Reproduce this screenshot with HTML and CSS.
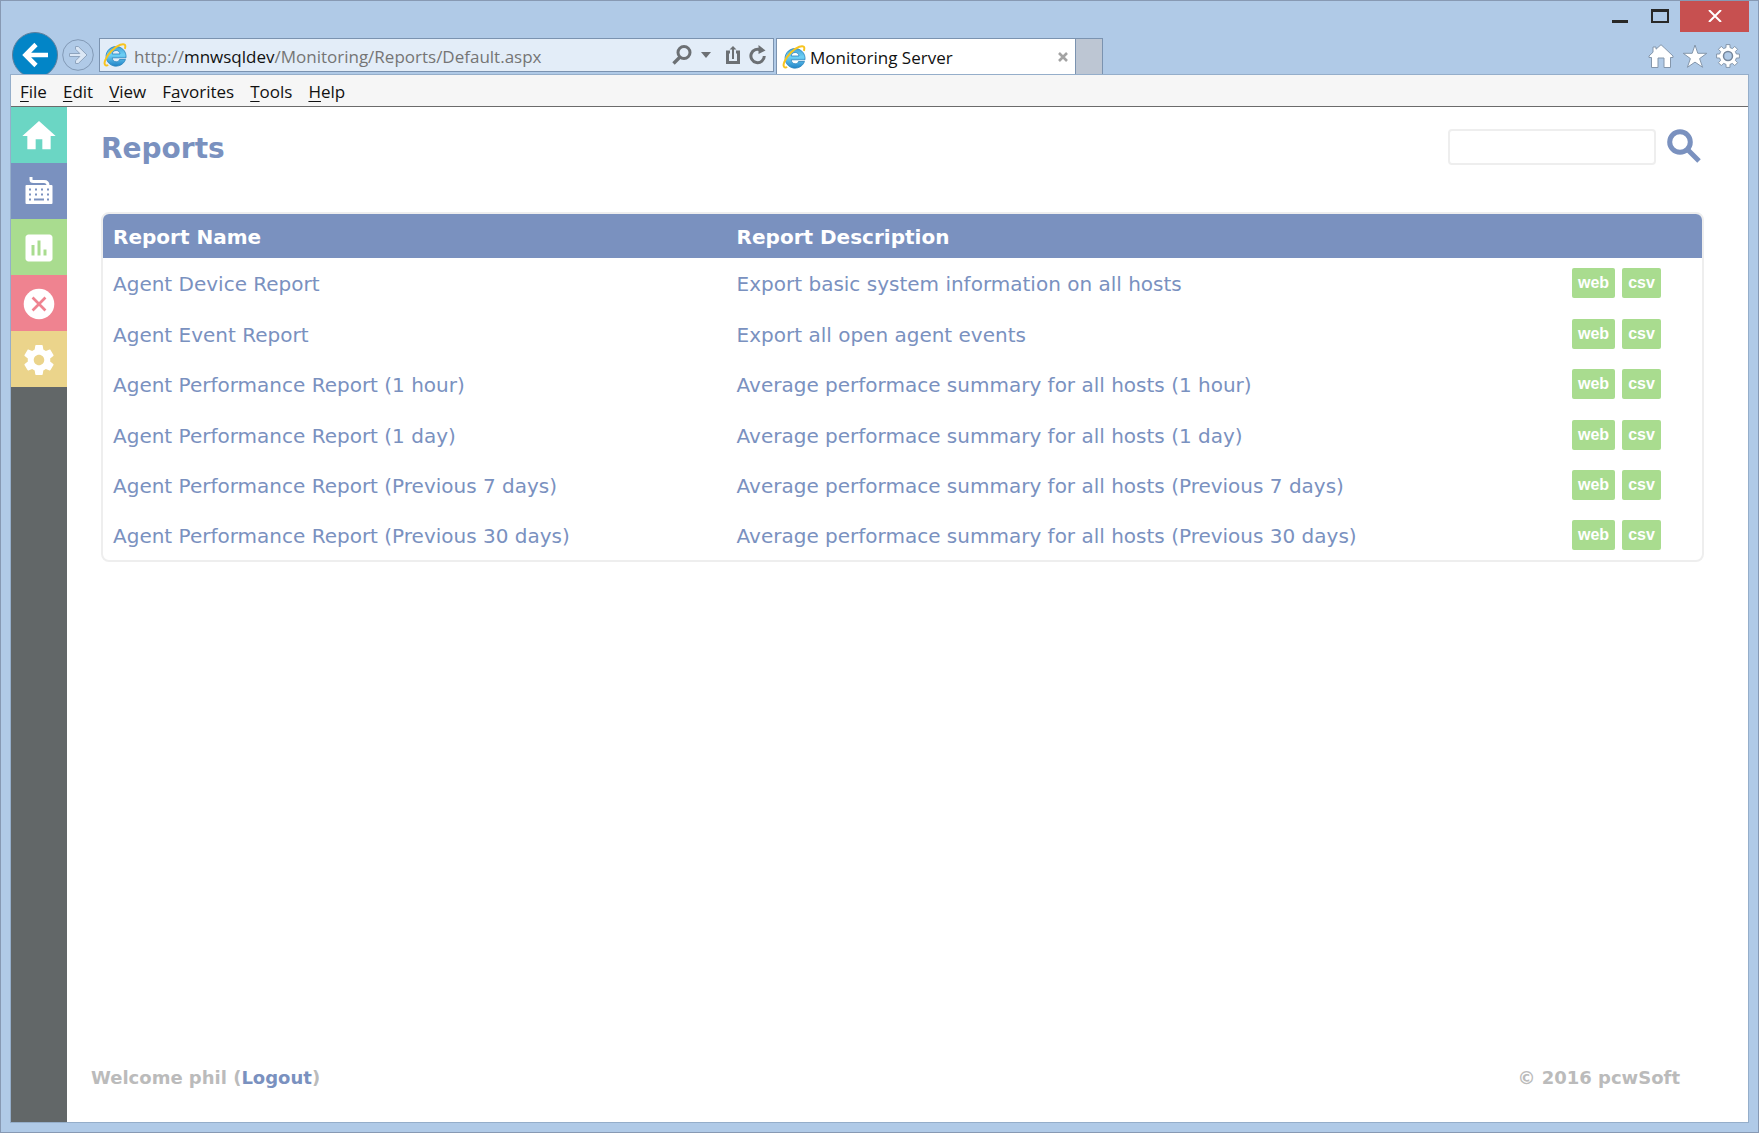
FILE: index.html
```html
<!DOCTYPE html>
<html lang="en">
<head>
<meta charset="utf-8">
<meta name="viewport" content="width=device-width, initial-scale=1">
<title>Monitoring Server</title>
<link rel="stylesheet" href="styles.css">
</head>
<body>
<svg class="defs" aria-hidden="true">
  <defs>
    <linearGradient id="ie-blue" gradientUnits="userSpaceOnUse" x1="0" y1="3" x2="0" y2="23">
      <stop offset="0" stop-color="#3f9fd6"/>
      <stop offset=".45" stop-color="#6fd0f5"/>
      <stop offset="1" stop-color="#2285c8"/>
    </linearGradient>
    <symbol id="ie-logo" viewBox="0 0 24 24">
      <path d="M22.500 16.500A10 9.800 0 1 1 23 12.500V14.800H9.200C9.500 17.300 11 18.800 13.200 18.800 14.900 18.800 15.900 18 16.500 16.500zM9.200 11H17C16.700 8.700 15.300 7.500 13.200 7.500 11 7.500 9.600 8.700 9.200 11z" fill="url(#ie-blue)" fill-rule="evenodd" stroke="#2a84bd" stroke-width=".8"/>
      <path d="M5.200 22C2 23.800.6 21 2.400 16.800 5 10.700 11.500 3.800 17.300 1.700 21.800.2 23.200 2 21.800 5.800" fill="none" stroke="#f7c41f" stroke-width="2"/>
    </symbol>
  </defs>
</svg>
<div class="window">
  <header class="chrome">
    <div class="caption">
      <button class="caption-btn minimize" aria-label="Minimize"><svg width="16" height="14"><path d="M0 11h16v3H0z" fill="#282828"/></svg></button>
      <button class="caption-btn maximize" aria-label="Maximize"><svg width="18" height="14"><path d="M0 0h18v14H0zM2 3v9h14V3z" fill="#282828" fill-rule="evenodd"/></svg></button>
      <button class="caption-btn close" aria-label="Close"><svg width="14" height="12"><path d="M1 0l12 12M13 0L1 12" stroke="#fff" stroke-width="2"/></svg></button>
    </div>
    <div class="toolbar">
      <button class="back" aria-label="Back"><svg width="46" height="46" viewBox="0 0 46 46"><circle cx="23" cy="23" r="22.500" fill="#0285c7" stroke="#5f7f9c"/><path d="M36 23H14M24 12.500L13.500 23 24 33.500" fill="none" stroke="#fff" stroke-width="4.600"/></svg></button>
      <button class="forward" aria-label="Forward"><svg width="32" height="32" viewBox="0 0 32 32"><circle cx="16" cy="16" r="15.300" fill="none" stroke="#8299b5"/><path d="M7.500 14.500h10.300l-4.300-4.300V7.500h2.800l8.700 8.500-8.700 8.500h-2.800v-2.700l4.300-4.300H7.500z" fill="#dbe7f5" stroke="#8ea4be"/></svg></button>
      <div class="address">
        <svg class="logo" width="24" height="24"><use href="#ie-logo"/></svg>
        <div class="url" role="textbox" aria-label="Address" contenteditable="true" spellcheck="false">http://<span class="host">mnwsqldev</span>/Monitoring/Reports/Default.aspx</div>
        <button class="addr-btn search-btn" aria-label="Search"><svg width="20" height="20"><circle cx="12" cy="7.500" r="6" fill="none" stroke="#6c7074" stroke-width="3"/><path d="M8 12l-6.500 6.500" stroke="#6c7074" stroke-width="3.400"/></svg></button>
        <button class="addr-btn menu-btn" aria-label="Show address list"><svg width="10" height="6"><path d="M0 0h10L5 6z" fill="#6c7074"/></svg></button>
        <button class="addr-btn share-btn" aria-label="Share"><svg width="14" height="18"><path d="M4 6H1.500v10.500h11V6H10" fill="none" stroke="#6c7074" stroke-width="3"/><path d="M7 0l3.500 3.500H8V13H6V3.500H3.500z" fill="#6c7074"/></svg></button>
        <button class="addr-btn" aria-label="Refresh"><svg width="18" height="20"><path d="M12 5.200A6.700 6.700 0 1 0 15.300 11" fill="none" stroke="#6c7074" stroke-width="3"/><path d="M9.500 0l7 5.500-7 3.500z" fill="#6c7074"/></svg></button>
      </div>
      <div class="tab">
        <svg class="logo" width="24" height="24"><use href="#ie-logo"/></svg>
        <span class="tab-title">Monitoring Server</span>
        <button class="tab-close" aria-label="Close tab"><svg width="10" height="10"><path d="M1 1l8 8M9 1L1 9" stroke="#a3a3a3" stroke-width="2.600"/></svg></button>
      </div>
      <button class="new-tab" aria-label="New tab"></button>
      <div class="tools">
        <button aria-label="Home"><svg width="26" height="24"><path d="M13 .7l3.800 3.500L25 12v1.500h-2.500v10H16V14h-6v9.500H3.500v-10H1V12l4-3.800V3h3v2.200z" fill="#fff" stroke="#8496ab"/></svg></button>
        <button aria-label="Favorites"><svg width="26" height="24"><path d="M13 1l2.800 8.300h9l-7.200 5.300 3 8.700-7.600-5.200-7.600 5.200 3-8.700-7.200-5.300h9z" fill="#fff" stroke="#8496ab"/></svg></button>
        <button aria-label="Tools"><svg width="24" height="24" viewBox="0 0 24 24"><path d="M10 .6h4v3l2.500 1 2.200-2.200 2.900 2.900-2.200 2.200 1 2.500h3v4h-3l-1 2.500 2.200 2.200-2.900 2.900-2.200-2.200-2.500 1v3h-4v-3l-2.500-1-2.200 2.200-2.900-2.900 2.200-2.200-1-2.500h-3v-4h3l1-2.500-2.200-2.200 2.900-2.900 2.200 2.200 2.500-1z" fill="#fff" stroke="#8496ab"/><circle cx="12" cy="12" r="4.500" fill="#b0cae7" stroke="#75869b" stroke-width="1.500"/></svg></button>
      </div>
    </div>
  </header>
  <div class="client">
    <nav class="menubar" aria-label="Menu bar">
      <button><u>F</u>ile</button>
      <button><u>E</u>dit</button>
      <button><u>V</u>iew</button>
      <button>F<u>a</u>vorites</button>
      <button><u>T</u>ools</button>
      <button><u>H</u>elp</button>
    </nav>
    <div class="page">
      <nav class="sidebar" aria-label="Sections">
        <a href="#home" class="teal" aria-label="Home"><svg width="40" height="40" viewBox="0 0 24 24"><path d="M10 20v-6h4v6h5v-8h3L12 3 2 12h3v8z" fill="#fff"/></svg></a>
        <a href="#agents" class="blue" aria-label="Agents"><svg width="28" height="30" viewBox="0 0 28 30"><path d="M6 0v2.500C6 4 7 4.500 8.500 4.500H19c2.500 0 4 1 4 4" fill="none" stroke="#fff" stroke-width="3"/><rect x=".5" y="8" width="27" height="19" rx="1" fill="#fff"/><path d="M4 12.500h2M10 12.500h2M16 12.500h2M22 12.500h2M4 17.500h2M10 17.500h2M16 17.500h2M22 17.500h2M4 22.500h2M9 22.500h10M22 22.500h2" stroke="#7a91bf" stroke-width="2"/></svg></a>
        <a href="#reports" class="green" aria-label="Reports"><svg width="36" height="36" viewBox="0 0 24 24"><path d="M19 3H5c-1.100 0-2 .9-2 2v14c0 1.100.9 2 2 2h14c1.100 0 2-.9 2-2V5c0-1.100-.9-2-2-2zM9 17H7v-7h2zm4 0h-2V7h2zm4 0h-2v-4h2z" fill="#fff"/></svg></a>
        <a href="#errors" class="red" aria-label="Errors"><svg width="36" height="36" viewBox="0 0 24 24"><circle cx="12" cy="12" r="10.200" fill="#fff"/><path d="M7.700 7.700l8.600 8.600M16.300 7.700l-8.600 8.600" stroke="#ef8390" stroke-width="1.800"/></svg></a>
        <a href="#settings" class="yellow" aria-label="Settings"><svg width="36" height="36" viewBox="0 0 24 24"><path d="M19.430 12.980c.04-.32.07-.64.07-.98s-.03-.66-.07-.98l2.110-1.650c.19-.15.24-.42.12-.64l-2-3.460c-.12-.22-.39-.3-.61-.22l-2.490 1c-.52-.4-1.080-.73-1.690-.98l-.38-2.650C14.460 2.180 14.250 2 14 2h-4c-.25 0-.46.18-.49.42l-.38 2.650c-.61.25-1.170.59-1.690.98l-2.490-1c-.23-.09-.49 0-.61.22l-2 3.460c-.13.22-.07.49.12.64l2.110 1.650c-.04.32-.07.65-.07.98s.03.66.07.98l-2.110 1.650c-.19.15-.24.42-.12.64l2 3.460c.12.22.39.3.61.22l2.490-1c.52.4 1.080.73 1.690.98l.38 2.650c.03.24.24.42.49.42h4c.25 0 .46-.18.49-.42l.38-2.650c.61-.25 1.170-.59 1.690-.98l2.490 1c.23.09.49 0 .61-.22l2-3.460c.12-.22.07-.49-.12-.64zM12 15.500c-1.930 0-3.500-1.570-3.500-3.500s1.570-3.500 3.500-3.500 3.500 1.570 3.500 3.500-1.570 3.500-3.500 3.500z" fill="#fff"/></svg></a>
      </nav>
      <div class="body">
        <main>
          <div class="heading">
            <h1>Reports</h1>
            <form class="search" role="search">
              <input type="search" aria-label="Search reports">
              <button type="button" aria-label="Search"><svg width="34" height="34" viewBox="0 0 34 34"><circle cx="13" cy="13" r="10.300" fill="none" stroke="#7a91bf" stroke-width="5"/><path d="M20.500 20.500L32 32" stroke="#7a91bf" stroke-width="5"/></svg></button>
            </form>
          </div>
          <div class="panel">
            <table>
              <thead>
                <tr><th class="col-name">Report Name</th><th>Report Description</th><th class="col-actions"></th></tr>
              </thead>
              <tbody>
                <tr><td>Agent Device Report</td><td>Export basic system information on all hosts</td><td class="cell-actions"><div class="actions"><button>web</button><button>csv</button></div></td></tr>
                <tr><td>Agent Event Report</td><td>Export all open agent events</td><td class="cell-actions"><div class="actions"><button>web</button><button>csv</button></div></td></tr>
                <tr><td>Agent Performance Report (1 hour)</td><td>Average performace summary for all hosts (1 hour)</td><td class="cell-actions"><div class="actions"><button>web</button><button>csv</button></div></td></tr>
                <tr><td>Agent Performance Report (1 day)</td><td>Average performace summary for all hosts (1 day)</td><td class="cell-actions"><div class="actions"><button>web</button><button>csv</button></div></td></tr>
                <tr><td>Agent Performance Report (Previous 7 days)</td><td>Average performace summary for all hosts (Previous 7 days)</td><td class="cell-actions"><div class="actions"><button>web</button><button>csv</button></div></td></tr>
                <tr><td>Agent Performance Report (Previous 30 days)</td><td>Average performace summary for all hosts (Previous 30 days)</td><td class="cell-actions"><div class="actions"><button>web</button><button>csv</button></div></td></tr>
              </tbody>
            </table>
          </div>
        </main>
        <footer>
          <span>Welcome phil (<a href="#logout">Logout</a>)</span>
          <span>© 2016 pcwSoft</span>
        </footer>
      </div>
    </div>
  </div>
</div>
</body>
</html>
```
FILE: styles.css
```css
* { box-sizing: border-box; }

body {
  margin: 0;
  font-family: "DejaVu Sans", Verdana, sans-serif;
  font-size: 20px;
  color: #7a91bf;
}

button {
  margin: 0;
  padding: 0;
  border: 0;
  background: none;
  font: inherit;
  color: inherit;
}

svg { display: block; flex: none; }

.defs { position: absolute; width: 0; height: 0; }

/* Browser window */
.window {
  display: flex;
  flex-direction: column;
  min-height: 100vh;
  padding: 0 9px 9px;
  border: 1px solid #8799b3;
  background: #b0cae7;
}

.chrome, .menubar {
  font-family: "Open Sans", "Segoe UI", sans-serif;
  font-size: 17px;
  color: #111;
}

.caption {
  display: flex;
  justify-content: flex-end;
  height: 31px;
}

.caption-btn {
  display: flex;
  justify-content: center;
  padding-top: 8px;
  width: 40px;
}

.close {
  width: 69px;
  padding-top: 9px;
  background: #c75050;
}

.toolbar {
  display: flex;
  align-items: flex-end;
  height: 42px;
  padding-left: 2px;
  overflow: hidden;
}

.back { align-self: flex-start; }

.forward { margin: 0 5px 3px 4px; }

.address {
  display: flex;
  align-items: center;
  flex: 0 1 675px;
  min-width: 0;
  height: 34px;
  margin: 0 2px 2px 0;
  padding: 0 6px 0 3px;
  border: 1px solid #7b93b0;
  background: #e3edf8;
}

.url {
  flex: 1;
  min-width: 0;
  margin: 2px 0 0 7px;
  overflow: hidden;
  white-space: nowrap;
  outline: 0;
  color: #757575;
}

.host { color: #111; }

.search-btn { margin-right: 9px; }
.menu-btn { margin-right: 15px; }
.share-btn { margin-right: 9px; }

.tab {
  display: flex;
  align-items: center;
  flex: 0 1 300px;
  min-width: 0;
  height: 36px;
  padding: 0 7px 0 5px;
  border: 1px solid #7b93b0;
  border-bottom: 0;
  background: #fff;
}

.tab-title {
  flex: 1;
  min-width: 0;
  margin: 2px 0 0 4px;
  overflow: hidden;
  white-space: nowrap;
}

.new-tab {
  width: 27px;
  height: 36px;
  border: 1px solid #7b93b0;
  border-width: 1px 1px 0 0;
  background: #bdc6d3;
}

.tools {
  display: flex;
  gap: 8px;
  margin-left: auto;
  padding: 0 9px 6px 0;
}

.client {
  display: flex;
  flex-direction: column;
  flex: 1;
  border: 1px solid #95aeca;
  background: #fff;
}

.menubar {
  display: flex;
  gap: 16px;
  height: 32px;
  padding: 2px 9px 0;
  border-bottom: 1px solid #6b6b6b;
  background: #f6f6f6;
}

.menubar u { text-underline-offset: 3px; text-decoration-thickness: 1px; }

/* Monitoring page */
.page { display: flex; flex: 1; }

.sidebar {
  flex: none;
  width: 56px;
  background: #626768;
}

.sidebar a {
  display: flex;
  align-items: center;
  justify-content: center;
  height: 56px;
  padding-top: 2px;
}

.teal { background: #6bd6c4; }
.blue { background: #7a91bf; }
.green { background: #a9dc8f; }
.red { background: #ef8390; }
.yellow { background: #ebd48b; }

.body {
  display: flex;
  flex-direction: column;
  flex: 1;
  min-width: 0;
}

main { padding: 22px 44px 0 34px; }

.heading {
  display: flex;
  justify-content: space-between;
  align-items: center;
  margin-bottom: 47px;
}

h1 {
  margin: 0;
  padding-top: 4px;
  font-size: 28px;
  line-height: 32px;
}

.search {
  display: flex;
  align-items: flex-start;
  gap: 11px;
  padding-right: 3px;
}

.search input {
  width: 208px;
  height: 36px;
  padding: 0 8px;
  border: 2px solid #eee;
  border-radius: 4px;
  font: inherit;
  color: inherit;
}

.panel {
  overflow: hidden;
  border: 2px solid #eee;
  border-radius: 8px;
}

table {
  width: 100%;
  border-collapse: collapse;
  table-layout: fixed;
}

th, td { padding: 2px 10px 0; text-align: left; }

th {
  height: 44px;
  background: #7a91bf;
  color: #fff;
}

td { height: 50px; }
tr:nth-child(even):not(:last-child) td { height: 51px; }

.col-name { width: 39%; }
.col-actions { width: 140px; }
.cell-actions { padding-top: 0; }

.actions { display: flex; gap: 7px; }

.actions button {
  height: 30px;
  padding: 0 6px;
  border-radius: 2px;
  background: #a9dc8f;
  color: #fff;
  font: bold 16px "Liberation Sans", Arial, sans-serif;
}

footer {
  display: flex;
  justify-content: space-between;
  margin-top: auto;
  padding: 24px 68px 33px 24px;
  font-size: 18px;
  font-weight: bold;
  line-height: 22px;
  color: #bbb;
}

footer a { color: #7a91bf; text-decoration: none; }
```
